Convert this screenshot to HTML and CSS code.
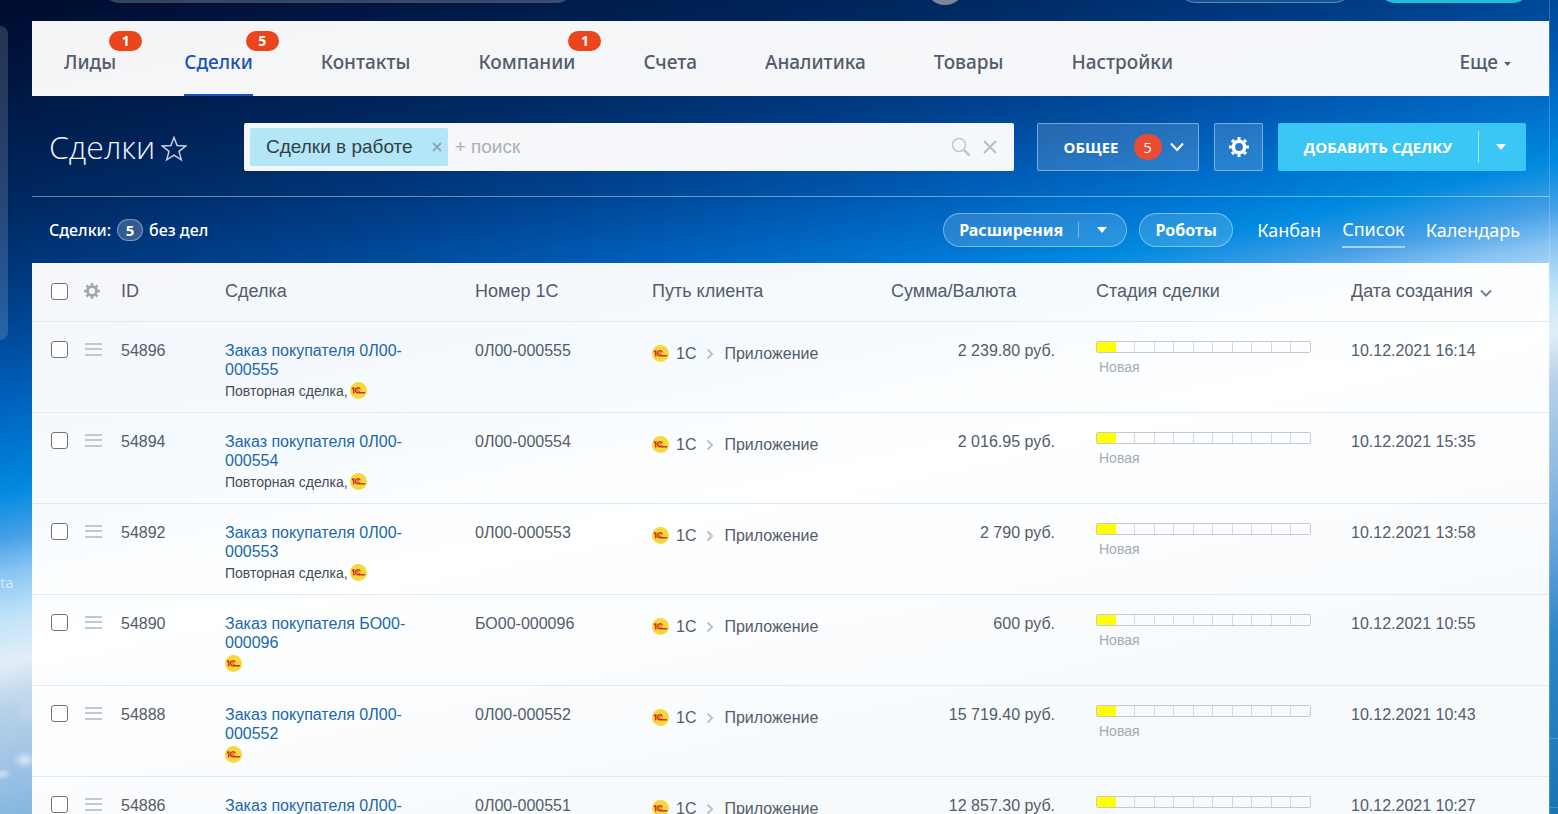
FILE: index.html
```html
<!DOCTYPE html>
<html lang="ru">
<head>
<meta charset="utf-8">
<title>Сделки</title>
<link rel="stylesheet" href="styles.css">
</head>
<body>
<svg class="sprite" aria-hidden="true">
  <symbol id="gear" viewBox="0 0 20 20">
    <circle cx="10" cy="10" r="5.700" fill="none" stroke="currentColor" stroke-width="3.600"/>
    <circle cx="10" cy="10" r="8.400" fill="none" stroke="currentColor" stroke-width="3" pathLength="80" stroke-dasharray="4.600 5.400" stroke-dashoffset="2.300"/>
  </symbol>
  <symbol id="onec" viewBox="0 0 17 17">
    <circle cx="8.500" cy="8.500" r="8.500" fill="#f5d93c"/>
    <path fill="none" stroke="#d3301f" stroke-width="1.600" d="M1.800 6.600 3.700 6v5.500"/>
    <path fill="none" stroke="#d3301f" stroke-width="1.400" d="M10.300 7.300A2.500 2.500 0 1 0 8 10.800h7.200"/>
    <path fill="none" stroke="#d3301f" stroke-width=".8" d="M8.900 8a.9.900 0 1 0-.8 1.300h2"/>
  </symbol>
  <symbol id="rows" viewBox="0 0 17 13">
    <path stroke="#c3c8ce" stroke-width="2" d="M0 1h17M0 6h17M0 12h17"/>
  </symbol>
  <symbol id="next" viewBox="0 0 8 12">
    <path fill="none" stroke="#bcc1c7" stroke-width="2" d="m1.500 1.500 4.500 4.500-4.500 4.500"/>
  </symbol>
  <symbol id="caret" viewBox="0 0 10 6"><path fill="currentColor" d="M0 0h10L5 6z"/></symbol>
</svg>
<div class="page">
  <aside class="rail">
    <div class="rail-panel"></div>
    <span class="rail-text">ta</span>
  </aside>
  <main class="main">
    <header class="top">
      <div class="top-search"></div>
      <div class="top-avatar"></div>
      <div class="top-outline"></div>
      <div class="top-teal"></div>
    </header>
    <nav class="nav">
      <a href="#" class="tab">Лиды<span class="badge">1</span></a>
      <a href="#" class="tab active">Сделки<span class="badge">5</span></a>
      <a href="#" class="tab">Контакты</a>
      <a href="#" class="tab">Компании<span class="badge">1</span></a>
      <a href="#" class="tab">Счета</a>
      <a href="#" class="tab">Аналитика</a>
      <a href="#" class="tab">Товары</a>
      <a href="#" class="tab">Настройки</a>
      <a href="#" class="tab more">Еще<svg class="more-caret"><use href="#caret"/></svg></a>
    </nav>
    <section class="toolbar">
      <div class="heading">
        <h1>Сделки</h1>
        <svg class="star" viewBox="0 0 26 26"><path fill="none" stroke="#c3cfe2" stroke-width="1.500" d="m13 1.500 3.100 8.100 8.600.4-6.700 5.400 2.300 8.400-7.300-4.700-7.300 4.700L8 15.400 1.300 10l8.600-.4z"/></svg>
      </div>
      <div class="search">
        <span class="chip">Сделки в работе
          <button class="plain chip-x" aria-label="Убрать фильтр"><svg viewBox="0 0 10 10"><path stroke="#8aa9b8" stroke-width="2" d="m1 1 8 8M9 1 1 9"/></svg></button>
        </span>
        <input class="search-input" type="text" placeholder="+ поиск" aria-label="поиск">
        <button class="plain" aria-label="Найти"><svg class="search-icon" viewBox="0 0 20 20"><circle cx="8" cy="8" r="6.500" fill="none" stroke="#c3c8cc" stroke-width="1.500"/><path stroke="#c3c8cc" stroke-width="2.500" d="m12.500 12.500 6 6"/></svg></button>
        <button class="plain" aria-label="Очистить"><svg class="clear-icon" viewBox="0 0 14 14"><path stroke="#b9bec4" stroke-width="2" d="m1 1 12 12M13 1 1 13"/></svg></button>
      </div>
      <div class="actions">
        <button class="glass common">ОБЩЕЕ<span class="count">5</span><svg class="down" viewBox="0 0 14 10"><path fill="none" stroke="#fff" stroke-width="2" d="m1 1.500 6 6.500 6-6.500"/></svg></button>
        <button class="glass settings" aria-label="Настройки"><svg><use href="#gear"/></svg></button>
        <div class="add">
          <button class="add-main">ДОБАВИТЬ СДЕЛКУ</button>
          <button class="add-more" aria-label="Еще действия"><svg class="caret"><use href="#caret"/></svg></button>
        </div>
      </div>
    </section>
    <section class="subbar">
      <div class="counter">Сделки:<span class="counter-num">5</span>без дел</div>
      <div class="views">
        <button class="pill ext">Расширения<span class="pill-line"></span><svg class="caret"><use href="#caret"/></svg></button>
        <button class="pill robots">Роботы</button>
        <a href="#" class="view">Канбан</a>
        <a href="#" class="view current">Список</a>
        <a href="#" class="view">Календарь</a>
      </div>
    </section>
    <table class="grid">
      <colgroup><col class="c-check"><col class="c-menu"><col class="c-id"><col class="c-deal"><col class="c-num"><col class="c-path"><col class="c-sum"><col class="c-stage"><col></colgroup>
      <thead>
        <tr>
          <th><input type="checkbox" aria-label="Выбрать все"></th>
          <th><button class="plain head-gear" aria-label="Настройка колонок"><svg><use href="#gear"/></svg></button></th>
          <th>ID</th><th>Сделка</th><th>Номер 1С</th><th>Путь клиента</th><th>Сумма/Валюта</th><th>Стадия сделки</th>
          <th>Дата создания<svg class="sort" viewBox="0 0 12 8"><path fill="none" stroke="#7b828b" stroke-width="2" d="m1 1.500 5 5 5-5"/></svg></th>
        </tr>
      </thead>
      <tbody id="rows-body"></tbody>
    </table>
  </main>
  <aside class="edge"></aside>
</div>
<script src="app.js"></script>
</body>
</html>
```

FILE: styles.css
```css
* { box-sizing: border-box; }
body {
  margin: 0;
  height: 100vh;
  overflow: hidden;
  font-family: "Liberation Sans", Arial, sans-serif;
  color: #535c69;
  background: linear-gradient(168deg, #000b2e 0%, #001742 8%, #002a64 19%, #00408c 27%, #0058b0 33%, #0074d0 39%, #008ae0 43%, #459fe7 47%, #87c3f3 50%, #bfe3f8 54%, #e2eef7 58%, #b7d1e9 62%, #95bee2 69%, #6ba6da 76%, #2f86c8 84%, #1a74b2 100%);
}
.sprite { position: absolute; width: 0; height: 0; }
button, input { font: inherit; color: inherit; }
button { cursor: pointer; }
a { color: inherit; text-decoration: none; }
.plain { border: 0; padding: 0; background: none; display: flex; }

.page { display: grid; grid-template-columns: 32px minmax(0, 1fr) 9px; min-height: 100vh; }
.rail {
  display: flex;
  flex-direction: column;
  padding-top: 26px;
  overflow: hidden;
  background:
    radial-gradient(ellipse 12px 9px at 25px 760px, rgba(255,255,255,.6), transparent),
    radial-gradient(ellipse 10px 6px at 2px 774px, rgba(255,255,255,.5), transparent),
    radial-gradient(ellipse 16px 20px at 28px 710px, rgba(255,255,255,.15), transparent);
}
.rail-panel { width: 8px; height: 314px; border-radius: 0 8px 8px 0; background: rgba(255,255,255,.15); }
.rail-text { margin-top: 230px; font: 15px/24px "Open Sans", sans-serif; color: rgba(255,255,255,.6); }
.edge {
  border-left: 1px solid rgba(255,255,255,.2);
  background:
    linear-gradient(rgba(255,255,255,.2), rgba(255,255,255,.2)) 0 738px / 100% 1px no-repeat,
    linear-gradient(rgba(255,255,255,.2), rgba(255,255,255,.2)) 0 807px / 100% 1px no-repeat;
}

.top { display: flex; align-items: flex-start; height: 21px; padding: 0 17px 0 68px; }
.top > div { height: 40px; margin-top: -37px; border-radius: 20px; }
.top .top-search { width: 476px; background: rgba(255,255,255,.22); }
.top .top-avatar { width: 40px; margin-top: -35px; margin-left: 349px; background: #7d8794; }
.top .top-outline { width: 178px; margin-left: auto; border: 1px solid #4d8fc9; background: rgba(255,255,255,.12); }
.top .top-teal { width: 156px; margin-left: 22px; background: #1fbfd9; }

.nav {
  display: flex;
  gap: 68px;
  height: 75px;
  padding: 0 38px 0 32px;
  background: rgba(255,255,255,.96);
  font: 500 19px/28px "Noto Sans", "Open Sans", sans-serif;
}
.tab { position: relative; padding-top: 27px; white-space: nowrap; }
.tab.active { color: #1b52be; border-bottom: 2px solid #1b52be; }
.more { margin-left: auto; }
.more-caret { width: 7px; height: 4px; margin-left: 6px; vertical-align: middle; }
.badge {
  position: absolute;
  top: 10px;
  right: -26px;
  width: 33px;
  border-radius: 10px;
  background: #ec441b;
  color: #fff;
  font: 700 14px/20px "Open Sans", sans-serif;
  text-align: center;
}

.toolbar {
  display: flex;
  align-items: center;
  height: 101px;
  padding: 2px 23px 0 17px;
  border-bottom: 1px solid rgba(255,255,255,.42);
}
.heading { display: flex; align-items: center; gap: 6px; width: 195px; flex: none; }
h1 { margin: 0; font: 300 32px/48px "Open Sans", sans-serif; color: #edf2fa; }
.star { width: 26px; height: 26px; margin-top: 4px; }
.search {
  display: flex;
  align-items: center;
  flex: 1;
  min-width: 0;
  height: 48px;
  padding: 0 17px 0 6px;
  border-radius: 2px;
  background: rgba(255,255,255,.96);
}
.chip {
  display: flex;
  align-items: center;
  gap: 19px;
  height: 38px;
  padding: 0 6px 0 16px;
  border-radius: 2px;
  background: #b3e6f6;
  color: #333f48;
  font-size: 19px;
  white-space: nowrap;
}
.chip-x svg { width: 10px; height: 10px; }
.search-input { flex: 1; min-width: 0; height: 38px; padding: 0 7px; border: 0; outline: 0; background: none; font-size: 19px; }
.search-input::placeholder { color: #aab0b6; opacity: 1; }
.search-icon { width: 20px; height: 20px; margin-right: 12px; }
.clear-icon { width: 14px; height: 14px; }
.actions { display: flex; gap: 15px; margin-left: 23px; font: 700 15px/20px "Open Sans", sans-serif; color: #fff; }
.glass {
  display: flex;
  align-items: center;
  justify-content: center;
  height: 48px;
  padding: 0;
  border: 1px solid rgba(255,255,255,.4);
  border-radius: 2px;
  background: rgba(255,255,255,.15);
}
.common { width: 162px; padding-left: 11px; }
.count { width: 28px; margin: 0 8px 0 15px; border-radius: 13px; background: #ea4b32; font-weight: 400; line-height: 26px; }
.down { width: 14px; height: 10px; }
.settings { width: 49px; }
.settings svg { width: 20px; height: 20px; }
.add { display: flex; align-items: center; width: 248px; height: 48px; border-radius: 2px; background: #3ac7f5; }
.add-main { flex: 1; height: 32px; padding: 0; border: 0; border-right: 1px solid rgba(255,255,255,.5); background: none; white-space: nowrap; }
.add-more { width: 47px; height: 32px; padding: 0 4px 0 0; border: 0; background: none; }
.caret { width: 10px; height: 6px; }
.add-more .caret { display: block; margin: auto; }

.subbar { display: flex; align-items: center; justify-content: space-between; height: 66px; padding: 0 29px 0 17px; color: #fff; }
.counter { display: flex; align-items: center; gap: 6px; font: 500 16px/24px "Noto Sans", "Open Sans", sans-serif; }
.counter-num { width: 26px; border: 1px solid rgba(255,255,255,.35); border-radius: 11px; background: rgba(255,255,255,.2); font-weight: 700; font-size: 15px; line-height: 20px; text-align: center; }
.views { display: flex; align-items: center; font: 400 18px/26px "Noto Sans", "Open Sans", sans-serif; }
.pill { display: flex; align-items: center; height: 34px; padding: 0 15px; border: 1px solid rgba(255,255,255,.4); border-radius: 17px; background: rgba(255,255,255,.15); font: 700 16px/20px "Noto Sans", "Open Sans", sans-serif; }
.ext { width: 184px; margin-right: 12px; }
.pill-line { width: 1px; height: 16px; margin: 0 18px 0 auto; background: rgba(255,255,255,.4); }
.ext .caret { margin-right: 4px; }
.robots { width: 94px; justify-content: center; margin-right: 3px; }
.view { margin-left: 21px; }
.current { padding: 4px 0; border-bottom: 2px solid #a9d4f7; }

.grid { width: 100%; table-layout: fixed; border-collapse: separate; border-spacing: 0; background: rgba(255,255,255,.96); font-size: 16px; line-height: 19px; }
.c-check { width: 52px; }
.c-menu { width: 37px; }
.c-id { width: 104px; }
.c-deal { width: 250px; }
.c-num { width: 177px; }
.c-path { width: 239px; }
.c-sum { width: 205px; }
.c-stage { width: 255px; }
th, td { padding: 0; text-align: left; border-bottom: 1px solid #e4e9ee; }
th { height: 59px; padding-bottom: 2px; font-size: 18px; font-weight: 400; white-space: nowrap; }
td { height: 91px; padding-top: 19px; vertical-align: top; }
th:first-child, td:first-child { padding-left: 19px; }
input[type="checkbox"] { display: block; appearance: none; width: 17px; height: 17px; margin: 0; border: 1px solid #6f7379; border-radius: 3px; background: #fff; }
.head-gear { color: #a0a6ad; }
.head-gear svg { width: 16px; height: 16px; }
.sort { width: 12px; height: 8px; margin-left: 7px; }
.menu svg { display: block; width: 17px; height: 13px; margin: 2px 0 0 1px; }
.deal a { display: block; width: 190px; color: #2067b0; }
.note { display: flex; gap: 2px; margin-top: 3px; font-size: 14px; color: #454c55; }
.onec { width: 17px; height: 17px; flex: none; }
.path-flow { display: flex; align-items: center; height: 25px; }
.path-flow .onec { margin-right: 7px; }
.path-flow .next { width: 8px; height: 12px; margin: 0 10px; }
.sum { padding-right: 41px; text-align: right; }
.bar { display: flex; width: 215px; height: 12px; border: 1px solid #c6cacf; border-radius: 2px; }
.bar i { flex: 1; border-left: 1px solid #d5d8dc; }
.bar i:first-child { border-left: 0; background: #ff0; }
.bar i:nth-child(2) { border-left: 0; }
.stage-name { margin-top: 5px; padding-left: 3px; font-size: 14px; color: #a5abb1; }
```

FILE: app.js
```js
const deals = [
  ["54896", "0Л00-000555", "2 239.80 руб.", "10.12.2021 16:14", true],
  ["54894", "0Л00-000554", "2 016.95 руб.", "10.12.2021 15:35", true],
  ["54892", "0Л00-000553", "2 790 руб.", "10.12.2021 13:58", true],
  ["54890", "БО00-000096", "600 руб.", "10.12.2021 10:55", false],
  ["54888", "0Л00-000552", "15 719.40 руб.", "10.12.2021 10:43", false],
  ["54886", "0Л00-000551", "12 857.30 руб.", "10.12.2021 10:27", false]
];
const onec = '<svg class="onec"><use href="#onec"/></svg>';
document.getElementById("rows-body").innerHTML = deals.map(([id, num, sum, date, repeat]) => `
  <tr>
    <td><input type="checkbox" aria-label="Выбрать ${id}"></td>
    <td class="menu"><button class="plain" aria-label="Действия"><svg><use href="#rows"/></svg></button></td>
    <td>${id}</td>
    <td class="deal"><a href="#">Заказ покупателя ${num}</a><div class="note">${repeat ? "<span>Повторная сделка,</span>" : ""}${onec}</div></td>
    <td>${num}</td>
    <td><div class="path-flow">${onec}1С<svg class="next"><use href="#next"/></svg>Приложение</div></td>
    <td class="sum">${sum}</td>
    <td><div class="bar">${"<i></i>".repeat(11)}</div><div class="stage-name">Новая</div></td>
    <td>${date}</td>
  </tr>`).join("");
```
